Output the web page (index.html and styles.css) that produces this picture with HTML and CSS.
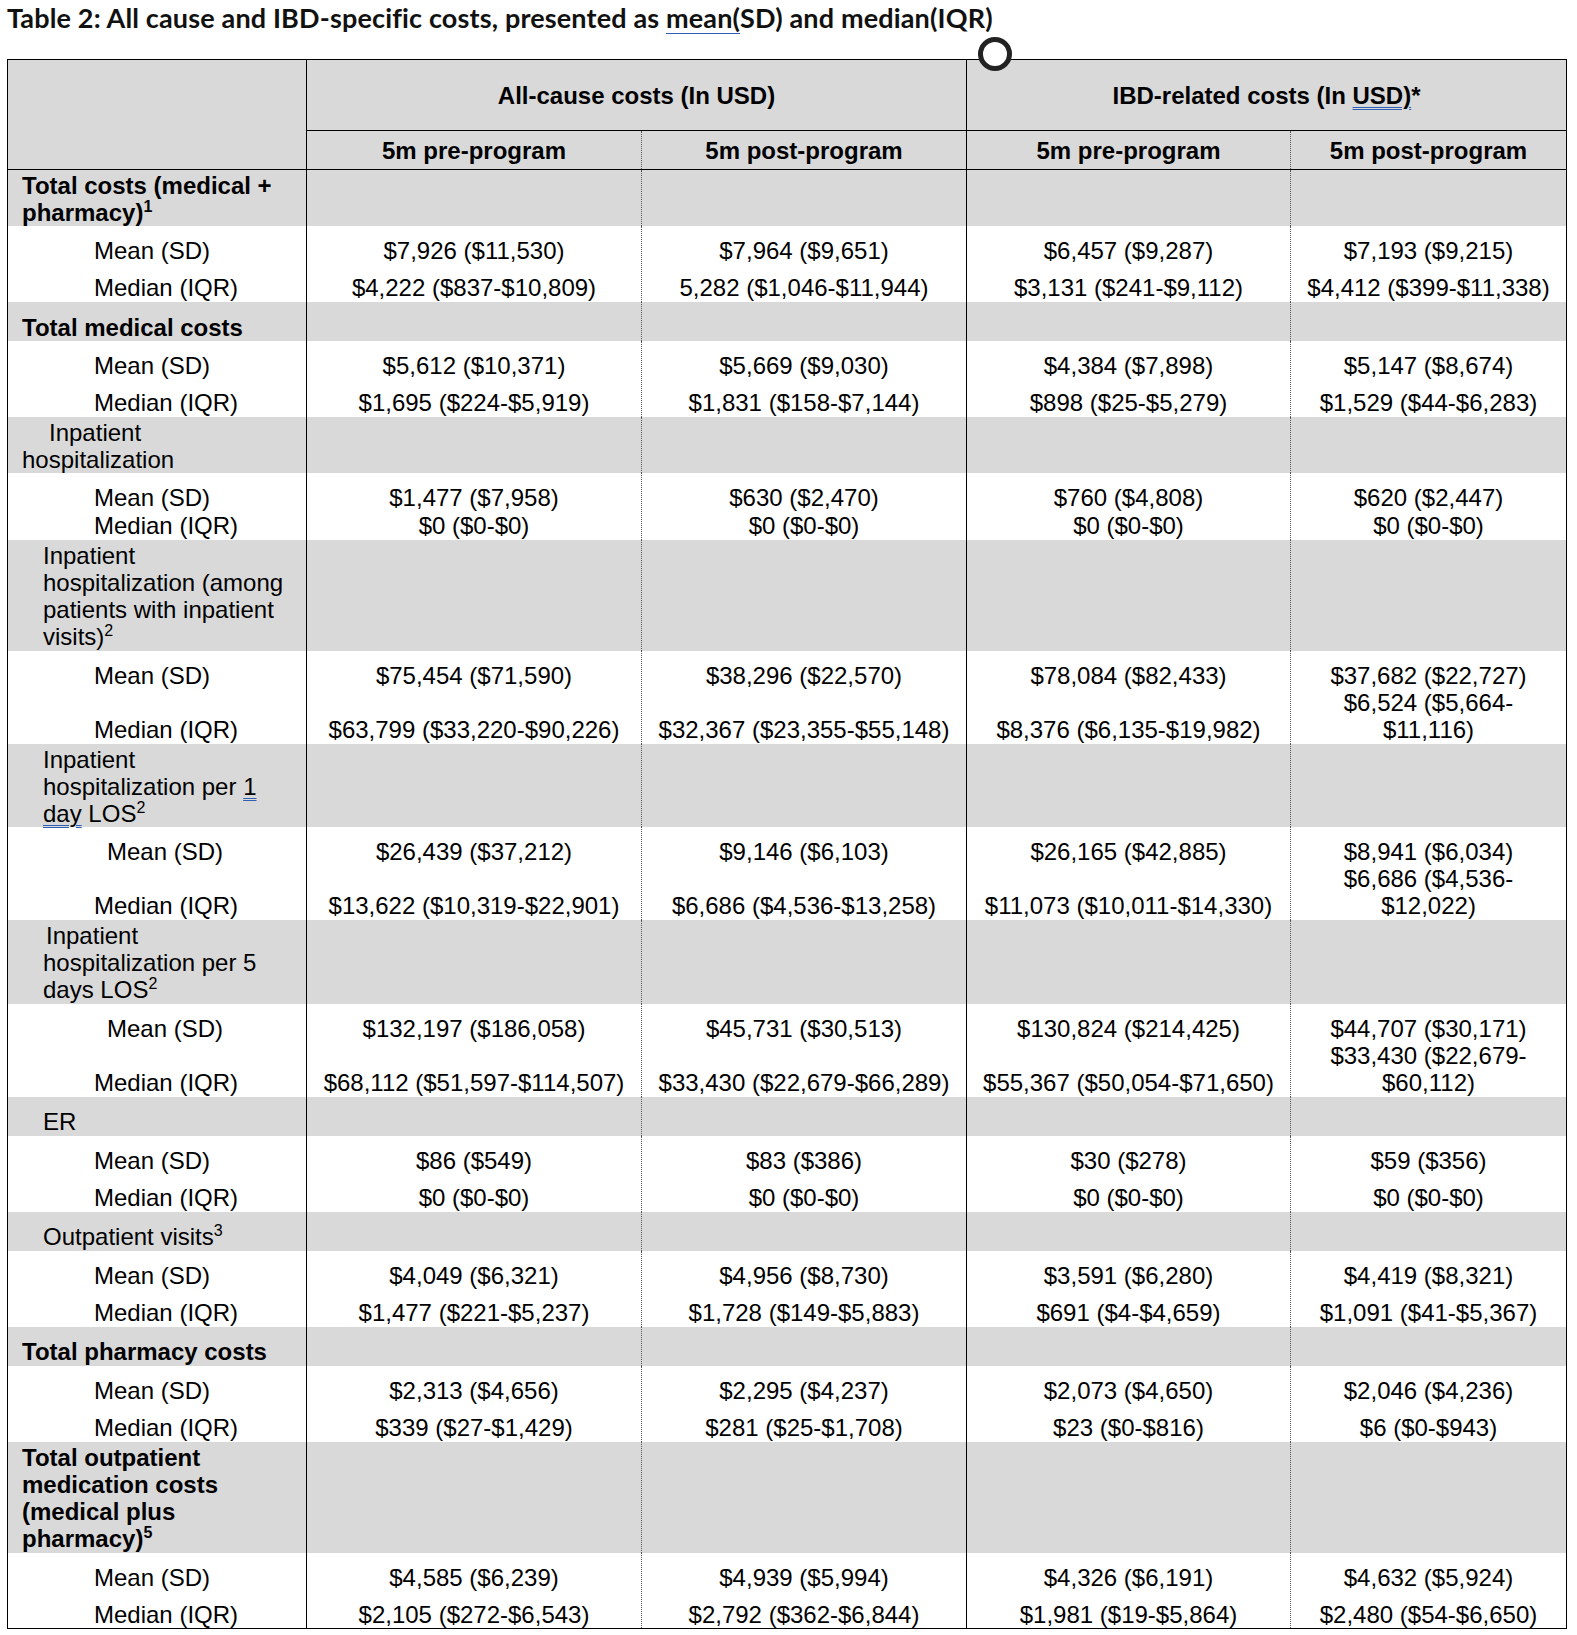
FILE: index.html
```html
<!DOCTYPE html>
<html lang="en">
<head>
<meta charset="utf-8">
<title>Table 2</title>
<link rel="stylesheet" href="styles.css">
</head>
<body>
<h1 class="title">Table 2: All cause and IBD-specific costs, presented as <span class="ul-single">mean(</span>SD) and median(IQR)</h1>
<div class="handle"></div>
<table class="costs">
  <colgroup>
    <col class="w-lab"><col class="w-a1"><col class="w-a2"><col class="w-i1"><col class="w-i2">
  </colgroup>
  <thead>
    <tr class="hr1">
      <th rowspan="2" class="lab-h"></th>
      <th colspan="2" class="grp grp-a">All-cause costs (In USD)</th>
      <th colspan="2" class="grp">IBD-related costs (In <span class="ul-double">USD)</span>*</th>
    </tr>
    <tr class="hr2">
      <th class="d1">5m pre-program</th>
      <th class="d2">5m post-program</th>
      <th class="d1">5m pre-program</th>
      <th>5m post-program</th>
    </tr>
  </thead>
  <tbody>
    <tr class="sec two">
      <td class="lab b l1">Total costs (medical +<br>pharmacy)<sup>1</sup></td><td class="d1"></td><td class="d2"></td><td class="d1"></td><td></td>
    </tr>
    <tr class="pair std">
      <td class="lab"><div class="ln m">Mean (SD)</div><div class="ln gap m">Median (IQR)</div></td>
      <td class="d1"><div class="ln">$7,926 ($11,530)</div><div class="ln gap">$4,222 ($837-$10,809)</div></td>
      <td class="d2"><div class="ln">$7,964 ($9,651)</div><div class="ln gap">5,282 ($1,046-$11,944)</div></td>
      <td class="d1"><div class="ln">$6,457 ($9,287)</div><div class="ln gap">$3,131 ($241-$9,112)</div></td>
      <td><div class="ln">$7,193 ($9,215)</div><div class="ln gap">$4,412 ($399-$11,338)</div></td>
    </tr>
    <tr class="sec one">
      <td class="lab b l1">Total medical costs</td><td class="d1"></td><td class="d2"></td><td class="d1"></td><td></td>
    </tr>
    <tr class="pair std">
      <td class="lab"><div class="ln m">Mean (SD)</div><div class="ln gap m">Median (IQR)</div></td>
      <td class="d1"><div class="ln">$5,612 ($10,371)</div><div class="ln gap">$1,695 ($224-$5,919)</div></td>
      <td class="d2"><div class="ln">$5,669 ($9,030)</div><div class="ln gap">$1,831 ($158-$7,144)</div></td>
      <td class="d1"><div class="ln">$4,384 ($7,898)</div><div class="ln gap">$898 ($25-$5,279)</div></td>
      <td><div class="ln">$5,147 ($8,674)</div><div class="ln gap">$1,529 ($44-$6,283)</div></td>
    </tr>
    <tr class="sec two">
      <td class="lab l1"><span class="ind">Inpatient</span><br>hospitalization</td><td class="d1"></td><td class="d2"></td><td class="d1"></td><td></td>
    </tr>
    <tr class="pair tight">
      <td class="lab"><div class="ln m">Mean (SD)</div><div class="ln tgap m">Median (IQR)</div></td>
      <td class="d1"><div class="ln">$1,477 ($7,958)</div><div class="ln tgap">$0 ($0-$0)</div></td>
      <td class="d2"><div class="ln">$630 ($2,470)</div><div class="ln tgap">$0 ($0-$0)</div></td>
      <td class="d1"><div class="ln">$760 ($4,808)</div><div class="ln tgap">$0 ($0-$0)</div></td>
      <td><div class="ln">$620 ($2,447)</div><div class="ln tgap">$0 ($0-$0)</div></td>
    </tr>
    <tr class="sec four">
      <td class="lab l2">Inpatient<br>hospitalization (among<br>patients with inpatient<br>visits)<sup>2</sup></td><td class="d1"></td><td class="d2"></td><td class="d1"></td><td></td>
    </tr>
    <tr class="pair tri">
      <td class="lab"><div class="ln m">Mean (SD)</div><div class="ln skip m">Median (IQR)</div></td>
      <td class="d1"><div class="ln">$75,454 ($71,590)</div><div class="ln skip">$63,799 ($33,220-$90,226)</div></td>
      <td class="d2"><div class="ln">$38,296 ($22,570)</div><div class="ln skip">$32,367 ($23,355-$55,148)</div></td>
      <td class="d1"><div class="ln">$78,084 ($82,433)</div><div class="ln skip">$8,376 ($6,135-$19,982)</div></td>
      <td><div class="ln">$37,682 ($22,727)</div><div class="ln">$6,524 ($5,664-<br>$11,116)</div></td>
    </tr>
    <tr class="sec three">
      <td class="lab l2">Inpatient<br>hospitalization per <span class="ul-double">1</span><br><span class="ul-double">day</span> LOS<sup>2</sup></td><td class="d1"></td><td class="d2"></td><td class="d1"></td><td></td>
    </tr>
    <tr class="pair tri">
      <td class="lab"><div class="ln m2">Mean (SD)</div><div class="ln skip m">Median (IQR)</div></td>
      <td class="d1"><div class="ln">$26,439 ($37,212)</div><div class="ln skip">$13,622 ($10,319-$22,901)</div></td>
      <td class="d2"><div class="ln">$9,146 ($6,103)</div><div class="ln skip">$6,686 ($4,536-$13,258)</div></td>
      <td class="d1"><div class="ln">$26,165 ($42,885)</div><div class="ln skip">$11,073 ($10,011-$14,330)</div></td>
      <td><div class="ln">$8,941 ($6,034)</div><div class="ln">$6,686 ($4,536-<br>$12,022)</div></td>
    </tr>
    <tr class="sec three">
      <td class="lab l2"><span class="ind2">Inpatient</span><br>hospitalization per 5<br>days LOS<sup>2</sup></td><td class="d1"></td><td class="d2"></td><td class="d1"></td><td></td>
    </tr>
    <tr class="pair tri">
      <td class="lab"><div class="ln m2">Mean (SD)</div><div class="ln skip m">Median (IQR)</div></td>
      <td class="d1"><div class="ln">$132,197 ($186,058)</div><div class="ln skip">$68,112 ($51,597-$114,507)</div></td>
      <td class="d2"><div class="ln">$45,731 ($30,513)</div><div class="ln skip">$33,430 ($22,679-$66,289)</div></td>
      <td class="d1"><div class="ln">$130,824 ($214,425)</div><div class="ln skip">$55,367 ($50,054-$71,650)</div></td>
      <td><div class="ln">$44,707 ($30,171)</div><div class="ln">$33,430 ($22,679-<br>$60,112)</div></td>
    </tr>
    <tr class="sec one">
      <td class="lab l2">ER</td><td class="d1"></td><td class="d2"></td><td class="d1"></td><td></td>
    </tr>
    <tr class="pair std">
      <td class="lab"><div class="ln m">Mean (SD)</div><div class="ln gap m">Median (IQR)</div></td>
      <td class="d1"><div class="ln">$86 ($549)</div><div class="ln gap">$0 ($0-$0)</div></td>
      <td class="d2"><div class="ln">$83 ($386)</div><div class="ln gap">$0 ($0-$0)</div></td>
      <td class="d1"><div class="ln">$30 ($278)</div><div class="ln gap">$0 ($0-$0)</div></td>
      <td><div class="ln">$59 ($356)</div><div class="ln gap">$0 ($0-$0)</div></td>
    </tr>
    <tr class="sec one">
      <td class="lab l2">Outpatient visits<sup>3</sup></td><td class="d1"></td><td class="d2"></td><td class="d1"></td><td></td>
    </tr>
    <tr class="pair std">
      <td class="lab"><div class="ln m">Mean (SD)</div><div class="ln gap m">Median (IQR)</div></td>
      <td class="d1"><div class="ln">$4,049 ($6,321)</div><div class="ln gap">$1,477 ($221-$5,237)</div></td>
      <td class="d2"><div class="ln">$4,956 ($8,730)</div><div class="ln gap">$1,728 ($149-$5,883)</div></td>
      <td class="d1"><div class="ln">$3,591 ($6,280)</div><div class="ln gap">$691 ($4-$4,659)</div></td>
      <td><div class="ln">$4,419 ($8,321)</div><div class="ln gap">$1,091 ($41-$5,367)</div></td>
    </tr>
    <tr class="sec one">
      <td class="lab b l1">Total pharmacy costs</td><td class="d1"></td><td class="d2"></td><td class="d1"></td><td></td>
    </tr>
    <tr class="pair std">
      <td class="lab"><div class="ln m">Mean (SD)</div><div class="ln gap m">Median (IQR)</div></td>
      <td class="d1"><div class="ln">$2,313 ($4,656)</div><div class="ln gap">$339 ($27-$1,429)</div></td>
      <td class="d2"><div class="ln">$2,295 ($4,237)</div><div class="ln gap">$281 ($25-$1,708)</div></td>
      <td class="d1"><div class="ln">$2,073 ($4,650)</div><div class="ln gap">$23 ($0-$816)</div></td>
      <td><div class="ln">$2,046 ($4,236)</div><div class="ln gap">$6 ($0-$943)</div></td>
    </tr>
    <tr class="sec four">
      <td class="lab b l1">Total outpatient<br>medication costs<br>(medical plus<br>pharmacy)<sup>5</sup></td><td class="d1"></td><td class="d2"></td><td class="d1"></td><td></td>
    </tr>
    <tr class="pair std">
      <td class="lab"><div class="ln m">Mean (SD)</div><div class="ln gap m">Median (IQR)</div></td>
      <td class="d1"><div class="ln">$4,585 ($6,239)</div><div class="ln gap">$2,105 ($272-$6,543)</div></td>
      <td class="d2"><div class="ln">$4,939 ($5,994)</div><div class="ln gap">$2,792 ($362-$6,844)</div></td>
      <td class="d1"><div class="ln">$4,326 ($6,191)</div><div class="ln gap">$1,981 ($19-$5,864)</div></td>
      <td><div class="ln">$4,632 ($5,924)</div><div class="ln gap">$2,480 ($54-$6,650)</div></td>
    </tr>
  </tbody>
</table>
</body>
</html>
```
FILE: styles.css
```css
html, body {
  margin: 0;
  padding: 0;
  background: #ffffff;
}

body {
  position: relative;
  color: #000;
  font-family: "Liberation Sans", Arial, sans-serif;
}

.title {
  margin: 0;
  height: 59px;
  box-sizing: border-box;
  padding: 3px 0 0 7px;
  font-family: Lato, "Open Sans", sans-serif;
  font-weight: 700;
  font-size: 27px;
  letter-spacing: 0.15px;
  line-height: 30px;
  color: #111;
}

.ul-single {
  text-decoration: underline;
  text-decoration-color: #2e5fb5;
  text-decoration-thickness: 1px;
  text-underline-offset: 5px;
}

.ul-double {
  text-decoration: underline double;
  text-decoration-color: #2e5fb5;
  text-decoration-thickness: 1px;
  text-underline-offset: 3px;
}

.handle {
  position: absolute;
  left: 978px;
  top: 37px;
  width: 34px;
  height: 34px;
  box-sizing: border-box;
  border: 5px solid #222;
  border-radius: 50%;
  background: #fff;
  z-index: 2;
}

.costs {
  margin-left: 7px;
  width: 1559px;
  table-layout: fixed;
  border-collapse: collapse;
  border: 1px solid #000;
  font-family: "Liberation Sans", Arial, sans-serif;
}

.w-lab { width: 299px; }
.w-a1 { width: 335px; }
.w-a2 { width: 325px; }
.w-i1 { width: 324px; }
.w-i2 { width: 276px; }

.costs th,
.costs td {
  padding: 0 6px;
  font-size: 24px;
  line-height: 27px;
  font-family: "Liberation Sans", Arial, sans-serif;
  vertical-align: top;
  text-align: center;
}

.costs thead th {
  background: #d9d9d9;
  font-weight: 700;
  vertical-align: middle;
}

.hr1 { height: 71px; }
.hr2 { height: 39px; }

.hr1 th.grp { border-bottom: 1px solid #000; }
.hr1 th.grp-a { border-right: 1px solid #000; }
.hr2 th { border-bottom: 1px solid #000; }

.lab-h { border-right: 1px solid #000; border-bottom: 1px solid #000; }

.costs td.lab { border-right: 1px solid #000; text-align: left; }
.costs .d1 { border-right: 1px dotted #555; }
.costs .d2 { border-right: 1px solid #000; }

.sec td { background: #d9d9d9; padding-top: 2px; }
.sec.one td { padding-top: 11.5px; }
.sec.one { height: 39px; }
.sec.two { height: 56px; }
.sec.three { height: 83.5px; }
.sec.four { height: 111px; }

.lab.b { font-weight: 700; }
.lab.l1 { padding-left: 14px; }
.lab.l2 { padding-left: 35px; }
.ind { padding-left: 27px; }
.ind2 { padding-left: 3px; }

.pair td { padding-top: 11px; }
.pair.std { height: 76px; }
.pair.tight { height: 66.5px; }
.pair.tri { height: 93px; }

.ln { white-space: nowrap; }
.ln.gap { margin-top: 10px; }
.ln.tgap { margin-top: 1px; }
.ln.skip { margin-top: 27px; }
.ln.m { padding-left: 80px; }
.ln.m2 { padding-left: 93px; }

sup {
  font-size: 16px;
  line-height: 0;
  vertical-align: 9px;
}
```
